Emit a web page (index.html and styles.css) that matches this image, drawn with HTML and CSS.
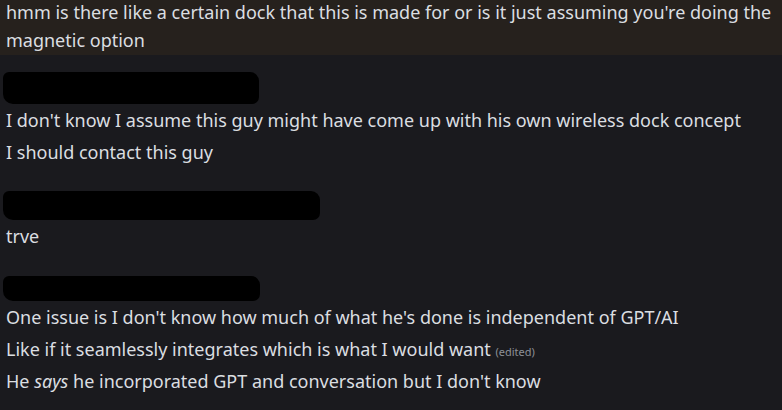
FILE: index.html
```html
<!doctype html>
<html lang="en">
<head>
    <meta charset="UTF-8">
    <title>chat</title>
    <link rel="stylesheet" href="styles.css">
</head>
<body>
    <div class="reply">
        <p>hmm is there like a certain dock that this is made for or is it just assuming you're doing the magnetic option</p>
    </div>
    <div class="msg">
        <div class="name name1"></div>
        <div class="line">I don't know I assume this guy might have come up with his own wireless dock concept</div>
        <div class="line">I should contact this guy</div>
    </div>
    <div class="msg">
        <div class="name name2"></div>
        <div class="line">trve</div>
    </div>
    <div class="msg">
        <div class="name name3"></div>
        <div class="line">One issue is I don't know how much of what he's done is independent of GPT/AI</div>
        <div class="line">Like if it seamlessly integrates which is what I would want <span class="edited">(edited)</span></div>
        <div class="line">He <em>says</em> he incorporated GPT and conversation but I don't know</div>
    </div>
</body>
</html>
```

FILE: styles.css
```css
*{
    margin: 0;
    padding: 0;
}
body{
    background-color: #1a1a1e;
    color: #dbdee1;
    font-family: "Noto Sans", "Open Sans", sans-serif;
    font-size: 18px;
    width: 782px;
    height: 410px;
    overflow: hidden;
}
.reply{
    background-color: #26211d;
    height: 57px;
    padding: 0 6px;
}
.reply p{
    line-height: 28px;
    margin-top: -2px;
}
.msg{
    padding: 0 6px;
}
.msg:nth-of-type(2){
    margin-top: 17px;
}
.msg:nth-of-type(3){
    margin-top: 23px;
}
.msg:nth-of-type(4){
    margin-top: 24px;
}
.name{
    background-color: #000;
    margin-left: -3px;
    border-radius: 6px 9px 7px 10px;
}
.name1{
    width: 256px;
    height: 32px;
}
.name2{
    width: 317px;
    height: 29px;
}
.name3{
    width: 257px;
    height: 25px;
}
.line{
    height: 32px;
    line-height: 32px;
    white-space: nowrap;
}
.edited{
    font-size: 11px;
    color: #8d9096;
}
```
